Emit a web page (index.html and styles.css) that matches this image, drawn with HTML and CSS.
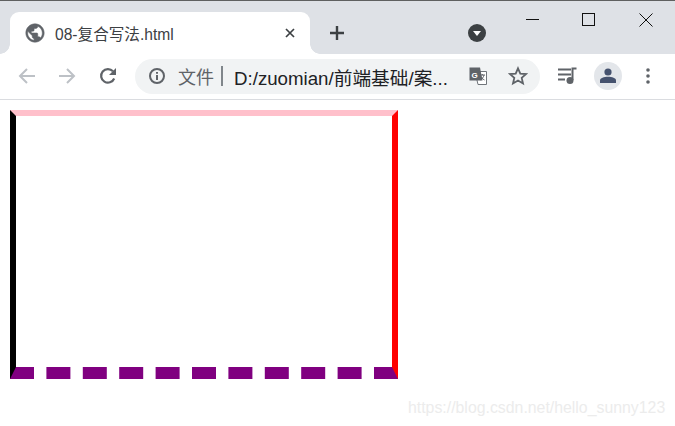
FILE: index.html
```html
<!DOCTYPE html>
<html lang="zh-CN">
<head>
<meta charset="utf-8">
<title>08-复合写法.html</title>
<link rel="stylesheet" href="styles.css">
</head>
<body>
<header class="chrome">
  <div class="tabstrip">
    <div class="tab">
      <svg class="globe" viewBox="0 0 24 24"><path fill="#5f6368" stroke="#5f6368" stroke-width=".6" d="M12 2C6.48 2 2 6.48 2 12s4.48 10 10 10 10-4.48 10-10S17.52 2 12 2zm-1 17.93c-3.95-.49-7-3.85-7-7.93 0-.62.08-1.21.21-1.79L9 15v1c0 1.1.9 2 2 2v1.93zm6.9-2.54c-.26-.81-1-1.39-1.9-1.39h-1v-3c0-.55-.45-1-1-1H8v-2h2c.55 0 1-.45 1-1V7h2c1.1 0 2-.9 2-2v-.41c2.93 1.19 5 4.06 5 7.41 0 2.08-.8 3.97-2.1 5.39z"/></svg>
      <span class="tab-title">08-复合写法.html</span>
      <svg class="tab-close" viewBox="0 0 10 10"><path d="M1 1l8 8M9 1l-8 8" stroke="#3c4043" stroke-width="1.7" fill="none"/></svg>
    </div>
    <svg class="newtab" viewBox="0 0 14 14"><path d="M7 0v14M0 7h14" stroke="#3c4043" stroke-width="2.400" fill="none"/></svg>
    <svg class="tabsearch" viewBox="0 0 18 18"><circle cx="9" cy="9" r="9" fill="#3c4043"/><path d="M5 7h8l-4 5z" fill="#fff"/></svg>
    <div class="winctl">
      <svg class="min" viewBox="0 0 14 12"><path d="M0 6.500h13" stroke="#111" fill="none"/></svg>
      <svg class="max" viewBox="0 0 14 14"><rect x=".5" y=".5" width="12" height="12" stroke="#111" fill="none"/></svg>
      <svg class="cls" viewBox="0 0 14 14"><path d="M.5.5l13 13M13.500.5l-13 13" stroke="#111" fill="none"/></svg>
    </div>
  </div>
  <div class="toolbar">
    <svg class="nav back" viewBox="0 0 18 18"><path d="M17 9H2M9 2L2 9l7 7" stroke="#bdc1c6" stroke-width="2" fill="none"/></svg>
    <svg class="nav fwd" viewBox="0 0 18 18"><path d="M1 9h15M9 2l7 7-7 7" stroke="#bdc1c6" stroke-width="2" fill="none"/></svg>
    <svg class="nav reload" viewBox="0 0 18 18"><path d="M15.200 11.500A6.800 6.800 0 1 1 14 4.300" stroke="#5f6368" stroke-width="2.200" fill="none"/><path d="M17 1v7h-7z" fill="#5f6368"/></svg>
    <div class="omnibox">
      <svg class="info" viewBox="0 0 16 16"><circle cx="8" cy="8" r="7" stroke="#5f6368" stroke-width="2" fill="none"/><path d="M8 7v5M8 4v1.800" stroke="#5f6368" stroke-width="2" fill="none"/></svg>
      <span class="scheme">文件</span>
      <span class="sep"></span>
      <span class="url">D:/zuomian/前端基础/案...</span>
      <svg class="translate" viewBox="0 0 18 18"><path fill="#fff" stroke="#70757a" d="M6 4.500h11.500v13H9z"/><path fill="#5f6368" d="M.5.500h10.500l2.500 13H.5z"/><text x="2.500" y="10.500" class="tg">G</text><path d="M10.500 8h5.500M13.300 7v1.200M15 8c-.5 2.500-2 4-4 5M11.500 9c.6 1.600 2 3 4 4" stroke="#5f6368" fill="none"/></svg>
      <svg class="star" viewBox="0 0 20 20"><path d="M10 2.300l2.300 5.300 5.700.5-4.300 3.800 1.300 5.600-5-3-5 3 1.300-5.600L2 8.100l5.700-.5z" stroke="#5f6368" stroke-width="1.800" fill="none"/></svg>
    </div>
    <svg class="media" viewBox="0 0 20 18"><path d="M0 2.500h13M0 7.500h13M0 12.500h7" stroke="#5f6368" stroke-width="2" fill="none"/><path d="M14.500 13V1.500h4" stroke="#5f6368" stroke-width="2" fill="none"/><circle cx="12" cy="13.500" r="3.500" fill="#5f6368"/></svg>
    <div class="avatar"><svg viewBox="0 0 16 16"><circle cx="8" cy="4" r="3.600" fill="#45526e"/><path d="M0 15v-2.500C0 10 4 8.800 8 8.800s8 1.200 8 3.700V15z" fill="#45526e"/></svg></div>
    <svg class="menu" viewBox="0 0 4 16"><circle cx="2" cy="2" r="1.800" fill="#5f6368"/><circle cx="2" cy="8" r="1.800" fill="#5f6368"/><circle cx="2" cy="14" r="1.800" fill="#5f6368"/></svg>
  </div>
</header>
<main class="page">
  <div class="demo"></div>
</main>
<div class="watermark">https://blog.csdn.net/hello_sunny123</div>
</body>
</html>
```

FILE: styles.css
```css
* { box-sizing: border-box; }
html, body { margin: 0; height: 100%; overflow: hidden; background: #fff; }
body { font-family: "Liberation Sans", "Noto Sans CJK SC", sans-serif; position: relative; }
svg { display: block; flex: none; }

.chrome { display: flex; flex-direction: column; }
.tabstrip {
  height: 54px;
  background: #dee1e6;
  border-top: 1px solid #5f6060;
  padding: 11px 0 0 10px;
  display: flex;
  position: relative;
}
.tab {
  width: 300px;
  height: 42px;
  background: #fff;
  border-radius: 9px 9px 0 0;
  position: relative;
  display: flex;
  align-items: center;
  padding-left: 16px;
}
.tab::before, .tab::after {
  content: "";
  position: absolute;
  bottom: 0;
  width: 10px;
  height: 10px;
}
.tab::before { left: -10px; background: radial-gradient(circle at 0 0, #dee1e6 9.5px, #fff 10px); }
.tab::after { right: -10px; background: radial-gradient(circle at 100% 0, #dee1e6 9.5px, #fff 10px); }
.globe { width: 22px; height: 22px; margin-right: 9px; margin-left: -2px; margin-top: -1px; }
.tab-title {
  font-family: "Liberation Sans", "Noto Sans CJK SC", sans-serif;
  font-size: 15.6px;
  color: #3c4043;
  width: 229px;
  white-space: nowrap;
  margin-top: -1px;
}
.tab-close { width: 10px; height: 10px; margin-top: -1px; margin-left: 1px; }
.newtab { width: 14px; height: 14px; margin: 14px 0 0 20px; }
.tabsearch { width: 18px; height: 18px; margin: 12px 0 0 124px; }
.winctl { display: flex; align-items: flex-start; margin: 1px 0 0 40px; }
.min { width: 14px; height: 12px; }
.max { width: 14px; height: 14px; margin-left: 42px; }
.cls { width: 14px; height: 14px; margin-left: 43px; }

.toolbar {
  height: 46px;
  background: #fff;
  border-bottom: 1px solid #dadce0;
  display: flex;
  align-items: center;
  padding-bottom: 1px;
  padding-left: 18px;
}
.nav { width: 18px; height: 18px; }
.fwd { margin-left: 22px; }
.reload { margin-left: 23px; }
.omnibox {
  width: 405px;
  height: 35px;
  margin-left: 18px;
  border-radius: 18px;
  background: #f1f3f4;
  display: flex;
  align-items: center;
  padding-left: 14px;
}
.info { width: 16px; height: 16px; }
.scheme { font-size: 18px; color: #5f6368; margin-left: 13px; width: 35px; white-space: nowrap; }
.sep { width: 2px; height: 20px; background: #80868b; margin-left: 8px; }
.url { font-size: 18.7px; color: #202124; margin-left: 11px; width: 235px; white-space: nowrap; }
.translate { width: 18px; height: 18px; }
.tg { font: bold 8px "Liberation Sans", sans-serif; fill: #fff; }
.star { width: 20px; height: 20px; margin-left: 21px; }
.media { width: 20px; height: 18px; margin-left: 18px; }
.avatar {
  width: 28px;
  height: 28px;
  border-radius: 50%;
  background: #e3e6ea;
  margin-left: 16px;
  display: flex;
  align-items: center;
  justify-content: center;
}
.avatar svg { width: 16px; height: 16px; }
.menu { width: 4px; height: 16px; margin-left: 24px; }

.page { padding: 10px; }
.demo {
  width: 388px;
  height: 269px;
  border-top: 6px solid pink;
  border-left: 6px solid #000;
  border-right: 6px solid red;
  border-bottom: 12px dashed purple;
}
.watermark {
  position: absolute;
  left: 408px;
  top: 399px;
  font-size: 15.85px;
  color: #ececec;
  white-space: nowrap;
}
```
